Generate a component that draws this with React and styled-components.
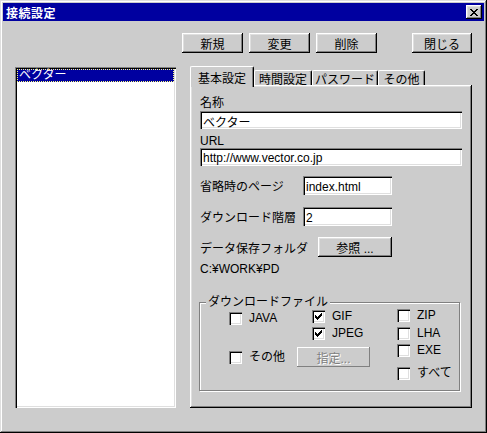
import React from "react";
import styled, { createGlobalStyle } from "styled-components";

const GlobalStyle = createGlobalStyle`
  html, body {
    margin: 0;
    padding: 0;
    background: #cccccc;
  }
`;

const raised = `
  box-shadow: inset -1px -1px #000, inset 1px 1px #fff,
    inset -2px -2px #808080, inset 2px 2px #dfdfdf;
`;

const sunken = `
  box-shadow: inset 1px 1px #808080, inset 2px 2px #000,
    inset -1px -1px #fff, inset -2px -2px #dfdfdf;
`;

const Window = styled.div`
  width: 487px;
  height: 433px;
  box-sizing: border-box;
  padding: 3px;
  display: flex;
  flex-direction: column;
  background: #cccccc;
  box-shadow: inset -1px -1px #000, inset 1px 1px #dfdfdf,
    inset -2px -2px #808080, inset 2px 2px #fff;
  font-family: "Liberation Sans", "Noto Sans CJK JP", sans-serif;
  font-size: 12px;
  color: #000;
`;

const TitleBar = styled.div`
  height: 18px;
  background: #0000a0;
  display: flex;
  align-items: center;
  justify-content: space-between;
  padding: 0 2px 0 3px;
`;

const TitleText = styled.span`
  color: #fff;
  font-weight: bold;
  font-size: 12px;
  letter-spacing: 0.5px;
`;

const CloseButton = styled.div`
  width: 16px;
  height: 14px;
  background: #cccccc;
  ${raised}
  display: flex;
  align-items: center;
  justify-content: center;
`;

const Body = styled.div`
  flex: 1;
  display: flex;
  flex-direction: column;
  padding: 12px 12px 0 12px;
`;

const Toolbar = styled.div`
  display: flex;
  justify-content: flex-end;
  gap: 6px;
  height: 20px;
`;

const Button = styled.button`
  width: ${(p) => p.$width || 61}px;
  height: ${(p) => p.$height || 20}px;
  margin-left: ${(p) => p.$gapLeft || 0}px;
  padding: 0;
  border: none;
  background: #cccccc;
  ${raised}
  font-family: inherit;
  font-size: 12px;
  color: #000;
  display: flex;
  align-items: center;
  justify-content: center;

  &:disabled {
    color: #808080;
    text-shadow: 1px 1px #fff;
    box-shadow: inset -1px -1px #808080, inset 1px 1px #fff;
  }
`;

const ContentRow = styled.div`
  display: flex;
  gap: 14px;
  margin-top: 13px;
  align-items: flex-start;
`;

const ListBox = styled.div`
  width: 161px;
  height: 341px;
  margin-top: 1px;
  box-sizing: border-box;
  padding: 2px;
  background: #fff;
  ${sunken}
`;

const ListItem = styled.div`
  height: 13px;
  line-height: 13px;
  padding-left: 2px;
  background: ${(p) => (p.$selected ? "#0000a0" : "transparent")};
  color: ${(p) => (p.$selected ? "#fff" : "#000")};
  outline: ${(p) => (p.$selected ? "1px dotted #ffff80" : "none")};
  outline-offset: -1px;
`;

const TabArea = styled.div`
  width: 282px;
  display: flex;
  flex-direction: column;
`;

const TabStrip = styled.div`
  display: flex;
  align-items: flex-end;
  height: 19px;
  position: relative;
  z-index: 1;
`;

const Tab = styled.div`
  width: ${(p) => p.$width}px;
  height: ${(p) => (p.$active ? 21 : 15)}px;
  margin-bottom: ${(p) => (p.$active ? -2 : 0)}px;
  box-sizing: border-box;
  background: #cccccc;
  border-top: 1px solid #fff;
  border-left: 1px solid #fff;
  border-right: 1px solid #000;
  border-radius: 2px 2px 0 0;
  box-shadow: inset -1px 0 #808080;
  display: flex;
  align-items: ${(p) => (p.$active ? "flex-start" : "center")};
  padding-top: ${(p) => (p.$active ? 2 : 0)}px;
  justify-content: center;
  white-space: nowrap;
`;

const TabPanel = styled.div`
  height: 323px;
  box-sizing: border-box;
  padding: 11px 10px 0 10px;
  background: #cccccc;
  ${raised}
  display: flex;
  flex-direction: column;
`;

const Label = styled.div`
  height: 14px;
  line-height: 14px;
  margin-top: ${(p) => p.$top || 0}px;
`;

const TextField = styled.input`
  width: ${(p) => p.$width || 262}px;
  height: ${(p) => p.$height || 18}px;
  margin-top: ${(p) => p.$top || 0}px;
  box-sizing: border-box;
  border: none;
  padding: 2px 3px 0 3px;
  background: #fff;
  ${sunken}
  font-family: inherit;
  font-size: 12px;
  color: #000;
  outline: none;
`;

const FieldRow = styled.div`
  display: flex;
  align-items: center;
  margin-top: ${(p) => p.$top || 0}px;
`;

const RowLabel = styled.div`
  width: ${(p) => p.$width || 103}px;
  flex-shrink: 0;
`;

const PathText = styled.div`
  margin-top: 5px;
  height: 14px;
  line-height: 14px;
`;

const GroupBox = styled.fieldset`
  margin: 19px 0 0 -1px;
  padding: 0;
  width: 261px;
  height: 96px;
  box-sizing: border-box;
  border: 1px solid #808080;
  box-shadow: inset 1px 1px #fff, 1px 1px #fff;
  min-width: 0;
`;

const Legend = styled.legend`
  margin-left: 6px;
  padding: 0 2px;
  height: 14px;
  line-height: 14px;
  background: #cccccc;
  position: relative;
`;

const GroupBody = styled.div`
  display: flex;
  padding: 0 0 0 29px;
`;

const LeftArea = styled.div`
  display: flex;
  flex-direction: column;
  width: 168px;
`;

const RowA = styled.div`
  display: flex;
  align-items: flex-start;
`;

const Column = styled.div`
  display: flex;
  flex-direction: column;
  width: ${(p) => p.$width || "auto"};
  margin-top: ${(p) => p.$top || 0}px;
  gap: ${(p) => p.$gap || 0}px;
`;

const RowB = styled.div`
  display: flex;
  align-items: center;
  margin-top: 7px;
`;

const CheckRow = styled.div`
  display: flex;
  align-items: center;
  gap: 7px;
  height: 13px;
  width: ${(p) => p.$width || "auto"};
  margin-top: ${(p) => p.$top || 0}px;
`;

const Box = styled.div`
  width: 13px;
  height: 13px;
  flex-shrink: 0;
  box-sizing: border-box;
  background: #fff;
  ${sunken}
  display: flex;
  align-items: center;
  justify-content: center;
`;

const CheckText = styled.span`
  line-height: 13px;
  white-space: nowrap;
`;

const CloseGlyph = () => {
  const rects = [
    [0, 0, 2], [6, 0, 2], [1, 1, 2], [5, 1, 2], [2, 2, 4], [3, 3, 2],
    [2, 4, 4], [1, 5, 2], [5, 5, 2], [0, 6, 2], [6, 6, 2],
  ];
  return (
    <svg width="8" height="7" viewBox="0 0 8 7" shapeRendering="crispEdges">
      {rects.map(([x, y, w]) => (
        <rect key={`${x}-${y}`} x={x} y={y} width={w} height="1" fill="#000" />
      ))}
    </svg>
  );
};

const CheckGlyph = () => {
  const cols = [2, 3, 4, 3, 2, 1, 0];
  return (
    <svg width="7" height="7" viewBox="0 0 7 7" shapeRendering="crispEdges">
      {cols.map((y, x) => (
        <rect key={x} x={x} y={y} width="1" height="3" fill="#000" />
      ))}
    </svg>
  );
};

const Check = ({ label, checked, width, top }) => (
  <CheckRow $width={width} $top={top}>
    <Box>{checked && <CheckGlyph />}</Box>
    <CheckText>{label}</CheckText>
  </CheckRow>
);

const tabs = [
  { name: "基本設定", width: 64, active: true },
  { name: "時間設定", width: 58 },
  { name: "パスワード", width: 66 },
  { name: "その他", width: 47 },
];

const App = () => (
  <Window>
    <GlobalStyle />
    <TitleBar>
      <TitleText>接続設定</TitleText>
      <CloseButton>
        <CloseGlyph />
      </CloseButton>
    </TitleBar>
    <Body>
      <Toolbar>
        <Button>新規</Button>
        <Button>変更</Button>
        <Button>削除</Button>
        <Button $width={60} $gapLeft={29}>閉じる</Button>
      </Toolbar>
      <ContentRow>
        <ListBox>
          <ListItem $selected>ベクター</ListItem>
        </ListBox>
        <TabArea>
          <TabStrip>
            {tabs.map((t) => (
              <Tab key={t.name} $width={t.width} $active={t.active}>
                {t.name}
              </Tab>
            ))}
          </TabStrip>
          <TabPanel>
            <Label>名称</Label>
            <TextField $top={1} readOnly value="ベクター" />
            <Label $top={5}>URL</Label>
            <TextField readOnly value="http://www.vector.co.jp" />
            <FieldRow $top={10}>
              <RowLabel>省略時のページ</RowLabel>
              <TextField $width={89} $height={19} readOnly value="index.html" />
            </FieldRow>
            <FieldRow $top={12}>
              <RowLabel>ダウンロード階層</RowLabel>
              <TextField $width={89} $height={19} readOnly value="2" />
            </FieldRow>
            <FieldRow $top={11}>
              <RowLabel $width={118}>データ保存フォルダ</RowLabel>
              <Button $width={74}>参照 ...</Button>
            </FieldRow>
            <PathText>C:¥WORK¥PD</PathText>
            <GroupBox>
              <Legend>ダウンロードファイル</Legend>
              <GroupBody>
                <LeftArea>
                  <RowA>
                    <Check label="JAVA" width="83px" top={3} />
                    <Column $top={1} $gap={4}>
                      <Check label="GIF" checked />
                      <Check label="JPEG" checked />
                    </Column>
                  </RowA>
                  <RowB>
                    <Check label="その他" width="68px" />
                    <Button $width={73} disabled>指定...</Button>
                  </RowB>
                </LeftArea>
                <Column>
                  <Check label="ZIP" />
                  <Check label="LHA" top={5} />
                  <Check label="EXE" top={4} />
                  <Check label="すべて" top={10} />
                </Column>
              </GroupBody>
            </GroupBox>
          </TabPanel>
        </TabArea>
      </ContentRow>
    </Body>
  </Window>
);

export default App;
